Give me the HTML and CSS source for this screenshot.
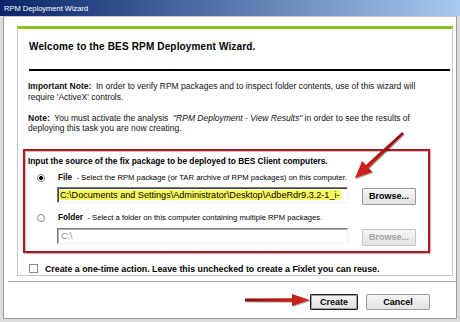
FILE: index.html
```html
<!DOCTYPE html>
<html lang="en">

<head>
    <meta charset="UTF-8">
    <title>RPM Deployment Wizard</title>
    <link rel="stylesheet" href="styles.css">
</head>

<body>
    <div class="titlebar">RPM Deployment Wizard</div>
    <div class="frame">
        <div class="panel">
            <h1>Welcome to the BES RPM Deployment Wizard.</h1>
            <div class="rule"></div>
            <p class="note"><b>Important Note:</b>&nbsp; In order to verify RPM packages and to inspect folder contents, use of this wizard will<br>require 'ActiveX' controls.</p>
            <p class="note"><b>Note:</b>&nbsp; You must activate the analysis &nbsp;<i>"RPM Deployment - View Results"</i> in order to see the results of<br>deploying this task you are now creating.</p>

            <div class="source">
                <div class="source-title">Input the source of the fix package to be deployed to BES Client computers.</div>
                <div class="option">
                    <span class="radio checked"></span>
                    <span class="option-text"><b>File</b>&nbsp; - Select the RPM package (or TAR archive of RPM packages) on this computer.</span>
                </div>
                <div class="field-row">
                    <div class="field"><span class="sel">C:\Documents and Settings\Administrator\Desktop\AdbeRdr9.3.2-1_i-</span></div>
                    <button class="btn">Browse...</button>
                </div>
                <div class="option second">
                    <span class="radio"></span>
                    <span class="option-text"><b>Folder</b>&nbsp; - Select a folder on this computer containing multiple RPM packages.</span>
                </div>
                <div class="field-row last">
                    <div class="field disabled">C:\</div>
                    <button class="btn" disabled>Browse...</button>
                </div>
            </div>

            <div class="onetime">
                <span class="check"></span>
                <span>Create a one-time action. Leave this unchecked to create a Fixlet you can reuse.</span>
            </div>
        </div>
        <div class="separator"></div>
        <div class="actions">
            <button class="btn action default">Create</button>
            <button class="btn action cancel">Cancel</button>
        </div>
    </div>

    <!-- callout arrows drawn over the dialog -->
    <svg class="arrow arrow-file" width="64" height="60" viewBox="0 0 64 60">
        <defs>
            <linearGradient id="redA" x1="0" y1="0" x2="66" y2="0" gradientUnits="userSpaceOnUse">
                <stop offset="0" stop-color="#8e0b0b" />
                <stop offset="1" stop-color="#d9261f" />
            </linearGradient>
        </defs>
        <g transform="translate(57,7) rotate(136.85)">
            <polygon points="0,-1.2 49,-2 49,-7.5 66,0 49,7.5 49,2 0,1.2" fill="url(#redA)" />
        </g>
    </svg>
    <svg class="arrow arrow-create" width="70" height="16" viewBox="0 0 70 16">
        <defs>
            <linearGradient id="redB" x1="0" y1="0" x2="67" y2="0" gradientUnits="userSpaceOnUse">
                <stop offset="0" stop-color="#8e0b0b" />
                <stop offset="1" stop-color="#d9261f" />
            </linearGradient>
        </defs>
        <polygon points="2,6.5 49,6.2 49,2 67,8 49,14 49,9.8 2,9.5" fill="url(#redB)" />
    </svg>
</body>

</html>
```

FILE: styles.css
```css
* {
    box-sizing: border-box;
}

body {
    margin: 0;
    width: 460px;
    height: 322px;
    overflow: hidden;
    position: relative;
    background-color: #dcdcdc;
    font-family: "Liberation Sans", Arial, sans-serif;
    font-size: 8px;
    color: #000;
}

.titlebar {
    height: 16px;
    padding: 3px 0 0 4px;
    background: linear-gradient(to right, #0a246a, #a6caf0);
    color: #fff;
    font-size: 7.5px;
    line-height: 12px;
}

.frame {
    height: 303px;
    margin: 0 3px;
    border: 1px solid #9c9c9c;
    border-top-color: #c8c8c8;
    background-color: #fff;
}

.panel {
    height: 250px;
    margin: 9px 3px 0 13px;
    border: 1px solid #c6c6c6;
    border-top: 3px solid #8cc21d;
}

h1 {
    margin: 12px 0 0 11px;
    font-size: 10px;
    line-height: 12px;
    letter-spacing: 0.15px;
}

.rule {
    height: 2px;
    margin: 16px 2px 0 11px;
    background-color: #000;
}

.note {
    margin: 10px 0 0 10px;
    font-size: 8.5px;
    line-height: 10.5px;
    color: #111;
}

.note + .note {
    margin-top: 10.5px;
}

.source {
    width: 407px;
    margin: 15px 0 0 5px;
    padding: 5px 0 5px 3px;
    border: 2px solid #b3161c;
    box-shadow: inset 1px 1px 0 #c8c8c8, 1px 1px 1px rgba(0, 0, 0, 0.25);
}

.source-title {
    font-size: 8.3px;
    font-weight: bold;
    line-height: 10px;
}

.option {
    display: flex;
    align-items: center;
    height: 10px;
    margin-top: 7px;
    padding-left: 9px;
}

.option.second {
    margin-top: 8px;
}

.option-text {
    font-size: 7.7px;
}

.option-text b {
    font-size: 8.2px;
}

.radio {
    width: 8px;
    height: 8px;
    margin-right: 13px;
    border: 1px solid #8a8a8a;
    border-radius: 50%;
    background-color: #fff;
}

.radio.checked {
    background: radial-gradient(circle, #000 0 1.6px, #fff 2.2px);
}

.field-row {
    display: flex;
    gap: 14px;
    margin-top: 4px;
    padding-left: 29px;
}

.field-row.last {
    margin-top: 5px;
}

.field {
    width: 291px;
    height: 16px;
    padding: 1px 0 0 1px;
    overflow: hidden;
    white-space: nowrap;
    border: 1px solid #f0f0f0;
    border-top-color: #7a7a7a;
    border-left-color: #7a7a7a;
    box-shadow: inset 1px 1px 0 #404040;
    font-size: 9.1px;
    line-height: 12px;
}

.field.disabled {
    padding-left: 3px;
    color: #8c8c8c;
    box-shadow: inset 1px 1px 0 #b0b0b0;
}

.sel {
    padding: 0 1px;
    background-color: #f8f85c;
}

.btn {
    width: 54px;
    height: 17px;
    margin-top: 1px;
    padding: 0;
    border: 1px solid #9a9a9a;
    border-radius: 1px;
    background: linear-gradient(#f6f6f6, #e2e2e2);
    font-family: "Liberation Sans", Arial, sans-serif;
    font-size: 9px;
    font-weight: bold;
    color: #000;
}

.btn:disabled {
    border-color: #c4c4c4;
    color: #a2a2a2;
}

.onetime {
    display: flex;
    align-items: center;
    height: 10px;
    margin-top: 11px;
    padding-left: 11px;
    font-size: 8.8px;
    font-weight: bold;
}

.check {
    width: 9px;
    height: 9px;
    margin-right: 7px;
    border: 1px solid #8a8a8a;
    background-color: #fff;
}

.separator {
    height: 2px;
    margin: 5px 0 0 4px;
    border-top: 1px solid #a4a4a4;
    border-bottom: 1px solid #fff;
}

.actions {
    display: flex;
    justify-content: flex-end;
    gap: 8px;
    margin-top: 11px;
    padding-right: 26px;
}

.btn.action {
    height: 16px;
    margin: 0;
}

.btn.default {
    width: 48px;
    border-color: #1e1e1e;
    box-shadow: inset 0 0 0 1px #a0a0a0;
}

.btn.cancel {
    width: 64px;
}

.arrow {
    position: absolute;
    filter: drop-shadow(1px 1px 0.6px rgba(0, 0, 0, 0.3));
}

.arrow-file {
    left: 346px;
    top: 126px;
}

.arrow-create {
    left: 243px;
    top: 292px;
}
```
